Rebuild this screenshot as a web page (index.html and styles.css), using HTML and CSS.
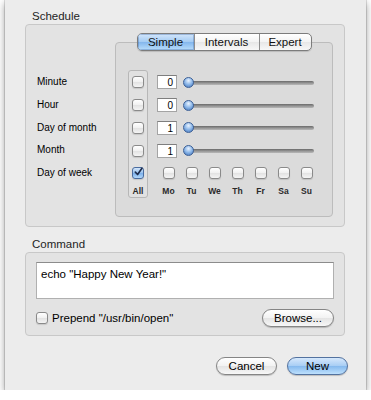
FILE: index.html
```html
<!DOCTYPE html>
<html lang="en">
<head>
    <meta charset="UTF-8">
    <meta name="viewport" content="width=device-width, initial-scale=1.0">
    <title>New Task</title>
    <link rel="stylesheet" href="styles.css">
</head>
<body>
    <div class="window">
        <div class="group-title">Schedule</div>
        <div class="group schedule">
            <div class="row-labels">
                <div>Minute</div>
                <div>Hour</div>
                <div>Day of month</div>
                <div>Month</div>
                <div>Day of week</div>
            </div>

            <div class="tab-box">
                <div class="tabs">
                    <span class="tab active">Simple</span>
                    <span class="tab">Intervals</span>
                    <span class="tab">Expert</span>
                </div>

                <div class="fields">
                    <!-- "All" column -->
                    <div class="all-col">
                        <div class="cell"><span class="check"></span></div>
                        <div class="cell"><span class="check"></span></div>
                        <div class="cell"><span class="check"></span></div>
                        <div class="cell"><span class="check"></span></div>
                        <div class="cell">
                            <span class="check on">
                                <svg width="10" height="10" viewBox="0 0 10 10"><path d="M1.5 5.2 L4 7.8 L8.8 0.8" fill="none" stroke="#1d2c4c" stroke-width="1.8" stroke-linecap="round" stroke-linejoin="round"/></svg>
                            </span>
                        </div>
                        <div class="cell small-label">All</div>
                    </div>

                    <div class="values">
                        <div class="value-row">
                            <span class="num">0</span>
                            <span class="slider"><span class="knob"></span></span>
                        </div>
                        <div class="value-row">
                            <span class="num">0</span>
                            <span class="slider"><span class="knob"></span></span>
                        </div>
                        <div class="value-row">
                            <span class="num">1</span>
                            <span class="slider"><span class="knob"></span></span>
                        </div>
                        <div class="value-row">
                            <span class="num">1</span>
                            <span class="slider"><span class="knob"></span></span>
                        </div>
                        <div class="days">
                            <span class="day"><span class="check"></span></span>
                            <span class="day"><span class="check"></span></span>
                            <span class="day"><span class="check"></span></span>
                            <span class="day"><span class="check"></span></span>
                            <span class="day"><span class="check"></span></span>
                            <span class="day"><span class="check"></span></span>
                            <span class="day"><span class="check"></span></span>
                        </div>
                        <div class="days day-names">
                            <span class="day">Mo</span>
                            <span class="day">Tu</span>
                            <span class="day">We</span>
                            <span class="day">Th</span>
                            <span class="day">Fr</span>
                            <span class="day">Sa</span>
                            <span class="day">Su</span>
                        </div>
                    </div>
                </div>
            </div>
        </div>

        <div class="group-title command-title">Command</div>
        <div class="group command">
            <div class="command-text">echo "Happy New Year!"</div>
            <div class="command-options">
                <label class="prepend"><span class="check"></span>Prepend "/usr/bin/open"</label>
                <button type="button" class="push browse">Browse...</button>
            </div>
        </div>

        <div class="actions">
            <button type="button" class="push">Cancel</button>
            <button type="button" class="push default">New</button>
        </div>
    </div>
</body>
</html>
```

FILE: styles.css
```css
body {
    margin: 0;
    background-color: #fff;
    font-family: 'Liberation Sans', Arial, sans-serif;
    color: #000;
}

.window {
    box-sizing: border-box;
    width: 361px;
    height: 390px;
    margin-left: 5px;
    padding: 9px 18px 15px 20px;
    background-color: #ececec;
    box-shadow: 0 0 0 1px rgba(0, 0, 0, 0.12), 0 3px 8px rgba(0, 0, 0, 0.4);
}

.group-title {
    font-size: 11.5px;
    line-height: 14px;
    height: 14px;
    padding-left: 7px;
    margin-bottom: 1px;
    color: #1e1e1e;
}

.command-title {
    margin-top: 10px;
}

.group {
    box-sizing: border-box;
    width: 320px;
    background-color: #e3e3e3;
    border: 1px solid #c8c8c8;
    border-radius: 4px;
}

/* Schedule */

.schedule {
    display: flex;
    align-items: flex-start;
    height: 203px;
    padding: 17px 11px 9px 11px;
}

.row-labels {
    width: 78px;
    margin-top: 29px;
    font-size: 10px;
}

.row-labels div {
    height: 22.75px;
    line-height: 22.75px;
}

.tab-box {
    box-sizing: border-box;
    width: 218px;
    height: 175px;
    padding: 0 12px;
    background-color: #dbdbdb;
    border: 1px solid #bcbcbc;
    border-radius: 4px;
}

.tabs {
    display: flex;
    width: 175px;
    height: 18px;
    margin: -10px auto 19px;
    box-sizing: border-box;
    border: 1px solid #7c7c7c;
    border-radius: 5px;
    overflow: hidden;
    background: linear-gradient(#ffffff, #f3f3f3 50%, #e7e7e7 51%, #f8f8f8);
    box-shadow: 0 1px 1px rgba(0, 0, 0, 0.15);
}

.tab {
    font-size: 11.5px;
    line-height: 16px;
    text-align: center;
    color: #111;
}

.tab:nth-child(1) { width: 56px; }
.tab:nth-child(2) { width: 64px; border-left: 1px solid #8e8e8e; }
.tab:nth-child(3) { flex: 1; border-left: 1px solid #8e8e8e; }

.tab.active {
    background: linear-gradient(#d3e6fb, #a3cbf3 50%, #83b6ec 51%, #b9defc);
    box-shadow: inset 0 0 0 1px rgba(60, 100, 160, 0.35);
}

.fields {
    display: flex;
    gap: 9px;
}

.all-col {
    box-sizing: border-box;
    width: 20px;
    border: 1px solid #b7b7b7;
    border-radius: 3px;
    background-color: #e1e1e1;
}

.cell {
    height: 22.75px;
    display: flex;
    align-items: center;
    justify-content: center;
}

.cell.small-label {
    height: 12px;
}

.small-label,
.day-names {
    font-size: 8.5px;
    font-weight: bold;
    color: #2a2a2a;
}

.values {
    padding-top: 1px;
}

.value-row {
    height: 22.75px;
    display: flex;
    align-items: center;
    gap: 6px;
}

.num {
    box-sizing: border-box;
    width: 20px;
    height: 14px;
    padding-right: 3px;
    text-align: right;
    font-size: 10px;
    line-height: 13px;
    background-color: #fff;
    border: 1px solid #a4a4a4;
    border-top-color: #7e7e7e;
}

.slider {
    position: relative;
    width: 131px;
    height: 11px;
}

.slider::before {
    content: "";
    position: absolute;
    left: 2px;
    right: 0;
    top: 4px;
    height: 4px;
    border-radius: 2px;
    background: linear-gradient(#6a6a6a, #9c9c9c 60%, #b8b8b8);
}

.knob {
    position: absolute;
    left: 0;
    top: 0;
    box-sizing: border-box;
    width: 11px;
    height: 11px;
    border-radius: 50%;
    border: 1px solid #3b5f96;
    background: radial-gradient(circle at 50% 30%, #e9f3ff, #8bb6e8 50%, #3f71b8);
}

.days {
    display: flex;
    height: 22.75px;
    align-items: center;
}

.days.day-names {
    height: 12px;
}

.day {
    width: 23px;
    display: flex;
    justify-content: center;
}

/* Checkboxes */

.check {
    box-sizing: border-box;
    display: inline-flex;
    align-items: center;
    justify-content: center;
    width: 12px;
    height: 12px;
    border: 1px solid #8a8a8a;
    border-radius: 3px;
    background: linear-gradient(#ffffff, #f0f0f0 50%, #e2e2e2 51%, #f4f4f4);
    box-shadow: 0 1px 1px rgba(0, 0, 0, 0.12);
}

.check.on {
    border-color: #4a6c9f;
    background: linear-gradient(#d2e5fa, #98c2ef 50%, #7aaeea 51%, #b2d8fb);
}

.check svg {
    margin-top: -3px;
    margin-left: 1px;
}

/* Command */

.command {
    height: 84px;
    padding: 9px 10px 8px 10px;
}

.command-text {
    box-sizing: border-box;
    height: 37px;
    padding: 4px 4px;
    font-size: 11.5px;
    line-height: 14px;
    background-color: #fff;
    border: 1px solid #b0b0b0;
    border-top-color: #8c8c8c;
}

.command-options {
    display: flex;
    justify-content: space-between;
    align-items: center;
    height: 18px;
    margin-top: 10px;
}

.prepend {
    display: flex;
    align-items: center;
    gap: 4px;
    font-size: 11.5px;
}

.push {
    box-sizing: border-box;
    height: 18px;
    padding: 0;
    font-family: 'Liberation Sans', Arial, sans-serif;
    font-size: 11.5px;
    color: #000;
    border: 1px solid #858585;
    border-radius: 9px;
    background: linear-gradient(#ffffff, #f2f2f2 50%, #e4e4e4 51%, #f7f7f7);
    box-shadow: 0 1px 1px rgba(0, 0, 0, 0.2);
}

.browse {
    width: 72px;
}

.actions {
    display: flex;
    justify-content: flex-end;
    gap: 10px;
    margin-top: 21px;
}

.actions .push {
    width: 61px;
}

.push.default {
    border-color: #53729f;
    background: linear-gradient(#d6e8fc, #a7cdf4 50%, #85b9ee 51%, #bde0fd);
}
```
